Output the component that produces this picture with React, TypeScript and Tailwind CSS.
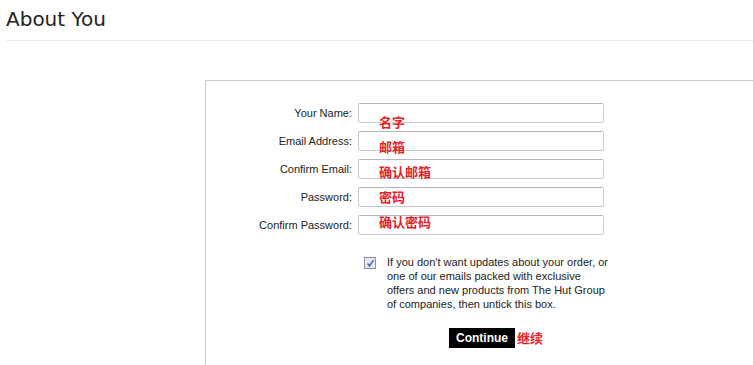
import React from "react";

const fields = ["Your Name:", "Email Address:", "Confirm Email:", "Password:", "Confirm Password:"];
const notes = ["名字", "邮箱", "确认邮箱", "密码", "确认密码"];

export default function App() {
  return (
    <div className="w-[753px] h-[365px] overflow-hidden bg-white text-[#222]" style={{ fontFamily: '"Liberation Sans", Arial, sans-serif' }}>
      <h1 className="pl-[6px] pt-[7px] h-[40px] text-[20px] leading-[24px] font-normal text-[#222]" style={{ fontFamily: '"DejaVu Sans", "Liberation Sans", sans-serif' }}>
        About You
      </h1>
      <div className="ml-[6px] border-t border-[#ebebeb]" />
      <div className="relative ml-[205px] mt-[39px] h-[300px] border-l border-t border-[#cccccc] pt-[22px]">
        <div className="flex flex-col gap-[8px]">
          {fields.map((f) => (
            <div key={f} className="flex items-center">
              <label className="w-[146px] text-right text-[11px] text-[#222]">{f}</label>
              <div className="ml-[6px] h-[20px] w-[246px] rounded-[2px] border border-[#c9c9c9] border-t-[#b5b5b5] bg-white" />
            </div>
          ))}
        </div>
        <div className="absolute left-[173px] top-[32px] flex flex-col" style={{ fontFamily: '"Noto Sans CJK SC", sans-serif' }}>
          {notes.map((n) => (
            <div key={n} className="h-[25px] text-[13px] leading-[17px] font-bold text-[#e3232a]">{n}</div>
          ))}
        </div>
        <div className="mt-[20px] ml-[158px] flex items-start">
          <div className="mt-[2px] flex h-[12px] w-[12px] items-center justify-center border border-[#8f8f9d] bg-[#e3e8f3]">
            <svg width="9" height="9" viewBox="0 0 9 9">
              <path d="M1.5 4.5 L3.5 7 L7.5 1.2" fill="none" stroke="#4a5da8" strokeWidth="1.4" />
            </svg>
          </div>
          <p className="ml-[11px] text-[11px] leading-[14px] text-[#222]">
            If you don't want updates about your order, or<br />
            one of our emails packed with exclusive<br />
            offers and new products from The Hut Group<br />
            of companies, then untick this box.
          </p>
        </div>
        <div className="mt-[17px] ml-[243px] flex items-center">
          <button className="h-[20px] w-[66px] bg-black text-[12px] font-bold text-white" style={{ fontFamily: '"Liberation Sans", Arial, sans-serif' }}>
            Continue
          </button>
          <span className="ml-[2px] text-[13px] font-bold text-[#e3232a]" style={{ fontFamily: '"Noto Sans CJK SC", sans-serif' }}>继续</span>
        </div>
      </div>
    </div>
  );
}
